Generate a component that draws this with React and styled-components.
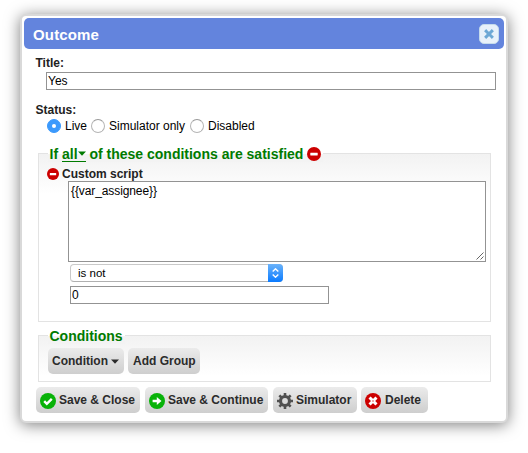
import React from "react";
import styled, { createGlobalStyle, css } from "styled-components";

const GlobalStyle = createGlobalStyle`
  * { box-sizing: border-box; }
  body {
    margin: 0;
    min-height: 453px;
    padding: 14px 0 0 20px;
    background: #fff;
    color: #222;
    font: 12px/14px "Liberation Sans", Arial, Helvetica, sans-serif;
  }
  input, textarea, button { font: inherit; }
  svg { display: block; flex: none; }
`;

const Dialog = styled.main`
  width: 488px;
  height: 409px;
  padding: 2px;
  border: 2px solid #d9d9d9;
  border-radius: 6px;
  background: #fff;
  box-shadow: 0 2px 15px rgba(0, 0, 0, 0.5);
`;

const TitleBar = styled.header`
  display: flex;
  align-items: center;
  justify-content: space-between;
  height: 31px;
  padding: 0 5px 0 9px;
  border-radius: 5px;
  background: #6384dd;
`;

const Heading = styled.h1`
  margin: 3px 0 0;
  color: #fff;
  font-size: 15px;
  line-height: 18px;
  letter-spacing: 0.15px;
`;

const CloseButton = styled.button`
  display: grid;
  place-items: center;
  width: 20px;
  height: 20px;
  margin-top: 1px;
  padding: 0;
  border: 1px solid #c5dbec;
  border-radius: 5px;
  background: #e8f1fa;
`;

const Form = styled.form`
  padding: 7px 14px 0 12px;
`;

const Label = styled.div`
  height: 14px;
  margin-left: -0.5px;
  font-weight: bold;
`;

const TextInput = styled.input`
  display: block;
  width: ${(p) => p.$width}px;
  height: 18px;
  margin: ${(p) => p.$margin};
  padding: 0 1px;
  border: 1px solid #939393;
  border-radius: 0;
  background: #fff;
  color: #000;
  outline: none;
`;

const RadioRow = styled.div`
  display: flex;
  height: 14px;
  margin: 2px 0 20px 11px;
`;

const RadioOption = styled.label`
  display: flex;
  gap: 4px;
  width: ${(p) => p.$width}px;
  color: #000;
  white-space: nowrap;
`;

const RadioMark = styled.span`
  display: grid;
  flex: none;
  place-items: center;
  width: 14px;
  height: 14px;
  border: 1px solid #b5b5b5;
  border-top-color: #999;
  border-radius: 50%;
  background: #fff;
  ${(p) =>
    p.$checked &&
    css`
      border-color: #3b99fc;
      background: #3b99fc;
      &::after {
        content: "";
        width: 4px;
        height: 4px;
        border-radius: 50%;
        background: #fff;
      }
    `}
`;

const Group = styled.section`
  width: 453px;
  height: ${(p) => p.$height}px;
  margin: 0 0 ${(p) => p.$gap}px 2px;
  border: 1px solid #e3e3e3;
  background: linear-gradient(#f2f2f2, #fff 40px);
`;

const Legend = styled.h2`
  display: flex;
  align-items: center;
  width: max-content;
  height: 16px;
  margin: -8px 0 0 9px;
  padding: 0 2px 0 1.5px;
  background: linear-gradient(#fff 8px, #f3f3f3 8px);
  color: #007b00;
  font-size: 14px;
  line-height: 16px;
  white-space: pre;
`;

const MatchMode = styled.span`
  display: flex;
  align-items: center;
  height: 16px;
  border-bottom: 1px solid #007b00;
`;

const RuleHeader = styled.div`
  display: flex;
  align-items: center;
  gap: 3px;
  height: 14px;
  margin: 5px 0 0 8px;
  font-weight: bold;
`;

const ScriptArea = styled.textarea`
  display: block;
  width: 418px;
  height: 81px;
  margin: 0 0 0 29px;
  padding: 2px;
  border: 1px solid #939393;
  background: #fff;
  color: #000;
  letter-spacing: -0.1px;
  resize: none;
  outline: none;
`;

const ScriptBox = styled.div`
  position: relative;
`;

const ResizeGrip = styled.svg`
  position: absolute;
  left: 437px;
  top: 71px;
`;

const Select = styled.div`
  display: flex;
  align-items: stretch;
  justify-content: space-between;
  width: 213px;
  height: 18px;
  margin: 2px 0 0 31px;
  border: 1px solid #c9c9c9;
  border-bottom-color: #b0b0b0;
  border-radius: 4px;
  background: #fff;
  color: #000;
  font-size: 11.5px;
  line-height: 17px;
`;

const SelectValue = styled.span`
  padding-left: 7px;
`;

const SelectArrows = styled.span`
  display: grid;
  place-items: center;
  width: 15px;
  margin: -1px;
  border-radius: 0 4px 4px 0;
  background: linear-gradient(#6bb3fa, #0a7bff);
`;

const ButtonRow = styled.div`
  display: flex;
  margin: ${(p) => p.$margin || "0"};
`;

const Button = styled.button`
  display: flex;
  align-items: center;
  flex: none;
  gap: 3px;
  width: ${(p) => p.$width}px;
  height: 26px;
  margin-right: ${(p) => p.$gap ?? 4}px;
  padding: 0 4px;
  border: 0;
  border-radius: 5px;
  background: linear-gradient(#ebebeb, #cecece);
  color: #2b2b2b;
  font-weight: bold;
  line-height: 14px;
  white-space: nowrap;
`;

const IconSlot = styled.span`
  margin-top: 2px;
`;

const ButtonText = styled.span`
  margin: -1px 0 0 ${(p) => p.$indent || 0}px;
`;

function MinusIcon({ size }) {
  return (
    <svg width={size} height={size} viewBox="0 0 14 14">
      <circle cx="7" cy="7" r="7" fill="#cc0000" />
      <rect x="3.3" y="5.8" width="7.4" height="2.6" rx="0.3" fill="#fff" />
    </svg>
  );
}

function Caret() {
  return (
    <svg width="8" height="5" viewBox="0 0 8 5">
      <path d="M0 0.5h8L4 4.8z" fill="currentColor" />
    </svg>
  );
}

function CheckIcon() {
  return (
    <svg width="16" height="16" viewBox="0 0 16 16">
      <circle cx="8" cy="8" r="8" fill="#08b208" />
      <path d="M4.2 8.2l2.6 2.6 5-5" fill="none" stroke="#fff" strokeWidth="2.4" />
    </svg>
  );
}

function ArrowIcon() {
  return (
    <svg width="16" height="16" viewBox="0 0 16 16">
      <circle cx="8" cy="8" r="8" fill="#08b208" />
      <path d="M3.6 6.7h4.2V3.9L12.5 8l-4.7 4.1V9.3H3.6z" fill="#fff" />
    </svg>
  );
}

function GearIcon() {
  return (
    <svg width="16" height="16" viewBox="0 0 16 16" fill="none" stroke="#505050">
      <circle cx="8" cy="8" r="4.5" strokeWidth="3.2" />
      {[0, 45, 90, 135].map((angle) => (
        <path
          key={angle}
          d="M8 0v3M8 13v3"
          strokeWidth="2.6"
          transform={`rotate(${angle} 8 8)`}
        />
      ))}
    </svg>
  );
}

function CrossIcon() {
  return (
    <svg width="16" height="16" viewBox="0 0 16 16">
      <circle cx="8" cy="8" r="8" fill="#cc0000" />
      <path d="M5.6 5.6l4.8 4.8M10.4 5.6l-4.8 4.8" stroke="#fff" strokeWidth="3" strokeLinecap="square" />
      <rect x="7.1" y="7.1" width="1.8" height="1.8" fill="#cc0000" opacity=".4" />
    </svg>
  );
}

export default function App() {
  return (
    <>
      <GlobalStyle />
      <Dialog>
        <TitleBar>
          <Heading>Outcome</Heading>
          <CloseButton type="button" aria-label="Close">
            <svg width="10" height="10" viewBox="0 0 10 10">
              <path
                d="M2.2 2.2l5.6 5.6M7.8 2.2L2.2 7.8"
                stroke="#6da8d5"
                strokeWidth="3"
                strokeLinecap="square"
              />
            </svg>
          </CloseButton>
        </TitleBar>
        <Form>
          <Label>Title:</Label>
          <TextInput $width={450} $margin="2px 0 13px 10px" defaultValue="Yes" />
          <Label>Status:</Label>
          <RadioRow>
            <RadioOption $width={44}>
              <RadioMark $checked />
              Live
            </RadioOption>
            <RadioOption $width={99}>
              <RadioMark />
              Simulator only
            </RadioOption>
            <RadioOption $width={70}>
              <RadioMark />
              Disabled
            </RadioOption>
          </RadioRow>

          <Group $height={169} $gap={13}>
            <Legend>
              {"If "}
              <MatchMode>
                all
                <Caret />
              </MatchMode>
              {" of these conditions are satisfied "}
              <MinusIcon size={14} />
            </Legend>
            <RuleHeader>
              <MinusIcon size={12} />
              Custom script
            </RuleHeader>
            <ScriptBox>
              <ScriptArea defaultValue="{{var_assignee}}" />
              <ResizeGrip width="8" height="8" viewBox="0 0 8 8">
                <path d="M0.5 7.5l7-7M4.5 7.5l3-3" stroke="#555" strokeWidth="0.9" />
              </ResizeGrip>
            </ScriptBox>
            <Select>
              <SelectValue>is not</SelectValue>
              <SelectArrows>
                <svg width="7" height="10" viewBox="0 0 7 10">
                  <path
                    d="M0.7 3.5l2.8-2.7 2.8 2.7M0.7 6.5l2.8 2.7 2.8-2.7"
                    fill="none"
                    stroke="#fff"
                    strokeWidth="1.4"
                  />
                </svg>
              </SelectArrows>
            </Select>
            <TextInput $width={259} $margin="4px 0 0 31px" defaultValue="0" />
          </Group>

          <Group $height={47} $gap={5}>
            <Legend>Conditions</Legend>
            <ButtonRow $margin="4px 0 0 9px">
              <Button type="button" $width={76}>
                <ButtonText>Condition</ButtonText>
                <Caret />
              </Button>
              <Button type="button" $width={72}>
                <ButtonText $indent={1}>Add Group</ButtonText>
              </Button>
            </ButtonRow>
          </Group>

          <ButtonRow>
            <Button type="button" $width={104} $gap={5}>
              <IconSlot><CheckIcon /></IconSlot>
              <ButtonText>Save &amp; Close</ButtonText>
            </Button>
            <Button type="button" $width={123} $gap={5}>
              <IconSlot><ArrowIcon /></IconSlot>
              <ButtonText>Save &amp; Continue</ButtonText>
            </Button>
            <Button type="button" $width={84}>
              <IconSlot><GearIcon /></IconSlot>
              <ButtonText>Simulator</ButtonText>
            </Button>
            <Button type="button" $width={67}>
              <IconSlot><CrossIcon /></IconSlot>
              <ButtonText $indent={1}>Delete</ButtonText>
            </Button>
          </ButtonRow>
        </Form>
      </Dialog>
    </>
  );
}
